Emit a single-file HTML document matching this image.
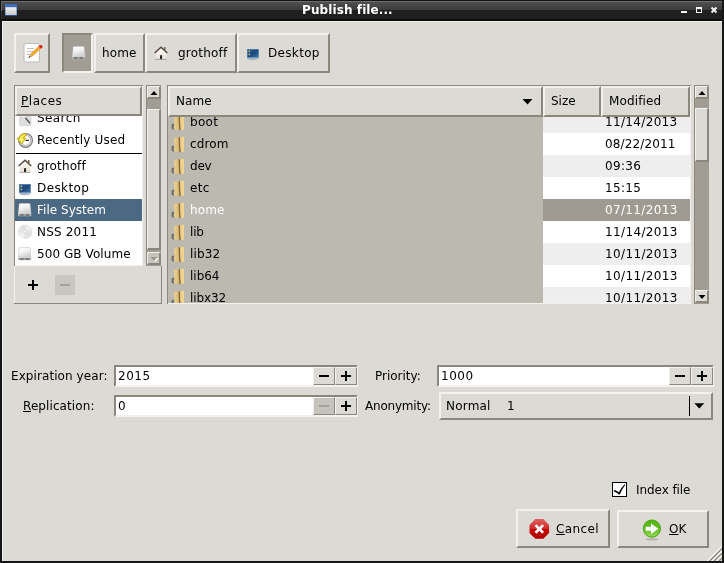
<!DOCTYPE html>
<html>
<head>
<meta charset="utf-8">
<title>Publish file...</title>
<style>
html,body{margin:0;padding:0;}
body{width:724px;height:563px;overflow:hidden;background:#dcdad5;font-family:"DejaVu Sans","Liberation Sans",sans-serif;font-size:12px;color:#000;position:relative;}
.abs{position:absolute;}
svg{display:block;overflow:visible;}
#win{position:absolute;left:0;top:0;width:724px;height:563px;background:#dcdad5;overflow:hidden;}
#title{position:absolute;left:0;top:0;width:724px;height:21px;background:linear-gradient(#141414 0,#141414 1px,#525252 1px,#3b3b3b 10px,#202020 10px,#1f1f1f 19px,#0c0c0c 19.500px,#0c0c0c 100%);}
#title .t{position:absolute;left:302px;top:2px;white-space:nowrap;letter-spacing:0.1px;color:#fff;font-weight:bold;font-size:12px;line-height:16px;will-change:transform;}
.bl{position:absolute;left:0;top:19px;width:2px;height:544px;background:#161616;}
.br{position:absolute;right:0;top:0;width:2px;height:563px;background:#161616;}
.bb{position:absolute;left:0;bottom:0;width:724px;height:2px;background:#161616;}
.btn{position:absolute;box-sizing:border-box;background:#dcdad5;border-style:solid;border-width:2px;border-color:#f2f1ee #8b877d #8b877d #f2f1ee;}
.btn.pressed{background:#a19d95;border-color:#8b877d #f2f1ee #f2f1ee #8b877d;}
.sbtn{position:absolute;box-sizing:border-box;border-style:solid;border-width:1px 2px 2px 1px;border-color:#f2f1ee #8b877d #8b877d #f2f1ee;}
.sbtn1{position:absolute;box-sizing:border-box;border-style:solid;border-width:1px;border-color:#f2f1ee #8b877d #8b877d #f2f1ee;}
.lbl{position:absolute;white-space:nowrap;line-height:16px;will-change:transform;}
.u{text-decoration:underline;}
.entry{position:absolute;box-sizing:border-box;background:#fff;border-style:solid;border-width:2px;border-color:#8b877d #f2f1ee #f2f1ee #8b877d;}
.sel{color:#fff;}
</style>
</head>
<body>
<div id="win">
<div id="title">
<div class="abs" style="left:1px;top:1px;width:722px;height:1px;background:#6e6e6e"></div>
<div class="abs" style="left:0;top:0;width:1px;height:21px;background:#101010"></div><div class="abs" style="left:1px;top:2px;width:1px;height:9px;background:#646464"></div><div class="abs" style="left:1px;top:11px;width:1px;height:8px;background:#333"></div>
<svg class="abs" style="left:5px;top:4px" width="12" height="12"><defs><linearGradient id="wg" x1="0" y1="0" x2="0" y2="1"><stop offset="0" stop-color="#f2f2f2"/><stop offset="1" stop-color="#c6c6c6"/></linearGradient></defs><rect width="12" height="12" fill="#3f6fb8"/><rect x="0.500" y="3.200" width="11" height="8" fill="url(#wg)"/><rect x="0" y="11" width="12" height="1" fill="#2c4f8c"/></svg>
<div class="t">Publish file...</div>
<svg class="abs" style="left:680px;top:6px" width="40" height="9">
<rect x="1" y="5" width="6" height="2" fill="#f4f4f4"/>
<rect x="16.500" y="1.500" width="5" height="5" fill="none" stroke="#f4f4f4" stroke-width="1"/><rect x="16" y="1" width="6" height="2" fill="#f4f4f4"/>
<path d="M31.500 1.500 L36.500 6.500 M36.500 1.500 L31.500 6.500" stroke="#f4f4f4" stroke-width="1.900" stroke-linecap="butt"/>
</svg>
</div>
<div class="bl"></div><div class="br"></div><div class="bb"></div>
<div class="abs" style="left:2px;top:21px;width:720px;height:1px;background:#efeeeb"></div>
<div class="abs" style="left:2px;top:21px;width:1px;height:540px;background:#efeeeb"></div>
<div class="btn " style="left:14px;top:33px;width:36px;height:40px;"></div>
<svg class="abs" style="left:23px;top:42px" width="21" height="22"><defs><linearGradient id="pg" x1="0" y1="0" x2="1" y2="1"><stop offset="0" stop-color="#f7b24a"/><stop offset="1" stop-color="#e8961e"/></linearGradient></defs>
<rect x="1" y="1.500" width="15.500" height="18.500" rx="1.800" fill="#fdfdfd" stroke="#bcbcba" stroke-width="1"/>
<path d="M4 6.500H11 M4 9.500H10 M4 12.500H8 M4 15.500H7" stroke="#c4c4c2" stroke-width="1"/>
<path d="M7.100 12.100 L15.500 4.350 L17.800 6.850 L9.400 14.600Z" fill="url(#pg)"/>
<path d="M7.100 12.100 L5.900 15.500 L9.400 14.600Z" fill="#c9a56c"/>
<path d="M6.500 13.800 L5.900 15.500 L7.700 15.050Z" fill="#4a4030"/>
<path d="M15.500 4.350 L16.400 3.500 Q17.800 2.400 19 3.600 Q20.100 4.900 19 5.900 L17.800 6.850Z" fill="#d61c1c"/></svg>
<div class="btn pressed" style="left:62px;top:33px;width:31px;height:40px;"></div>
<svg class="abs" style="left:71.6px;top:46.2px" width="14" height="14"><defs><linearGradient id="dg" x1="0" y1="0" x2="0.350" y2="1"><stop offset="0" stop-color="#ffffff"/><stop offset="0.450" stop-color="#f3f3f3"/><stop offset="1" stop-color="#d0d0d0"/></linearGradient></defs>
<path d="M2.200 0.200 H11.100 Q12.200 0.200 12.350 1.300 L13.300 10.800 V12.300 Q13.300 13.300 12.300 13.300 H1 Q0 13.300 0 12.300 V10.800 L0.950 1.300 Q1.100 0.200 2.200 0.200Z" fill="#c4c4c4"/>
<path d="M2.400 0.700 H10.900 Q11.800 0.700 11.900 1.600 L12.800 10.900 H0.500 L1.400 1.600 Q1.500 0.700 2.400 0.700Z" fill="url(#dg)"/>
<rect x="0.400" y="10.900" width="12.500" height="2.100" rx="0.700" fill="#a3a3a3"/>
<rect x="2.300" y="11.300" width="3.200" height="1.500" fill="#6c6c6c"/><rect x="7.700" y="11.300" width="3.200" height="1.500" fill="#6c6c6c"/></svg>
<div class="btn " style="left:94px;top:33px;width:51px;height:40px;"></div>
<div class="lbl" style="left:102px;top:45px;letter-spacing:0.12px;">home</div>
<div class="btn " style="left:145px;top:33px;width:92px;height:40px;"></div>
<svg class="abs" style="left:154.2px;top:45.8px" width="14" height="14"><defs><linearGradient id="hg" x1="0" y1="0" x2="0" y2="1"><stop offset="0" stop-color="#fbfaf8"/><stop offset="1" stop-color="#e9e3d8"/></linearGradient></defs>
<rect x="10" y="1" width="1.500" height="3" fill="#74614f"/>
<path d="M1.600 6.600 L7 2 L12.400 6.600 V13.200 H1.600Z" fill="url(#hg)"/>
<path d="M0.700 7 L7 1.300 L13.300 7" fill="none" stroke="#54453a" stroke-width="1.400"/>
<rect x="6" y="9.200" width="2.100" height="4" fill="#2b2622"/>
<path d="M1.300 13.400 H12.700" stroke="#9b9488" stroke-width="0.800"/></svg>
<div class="lbl" style="left:178px;top:45px;letter-spacing:0.20px;">grothoff</div>
<div class="btn " style="left:237px;top:33px;width:93px;height:40px;"></div>
<svg class="abs" style="left:247px;top:49px" width="12" height="12"><defs><linearGradient id="dk" x1="0" y1="0" x2="1" y2="1"><stop offset="0" stop-color="#2c5e94"/><stop offset="0.500" stop-color="#1b497c"/><stop offset="1" stop-color="#4378ae"/></linearGradient></defs>
<ellipse cx="5.900" cy="10.300" rx="4.600" ry="0.900" fill="#b4b4b2"/>
<rect x="0.300" y="0.300" width="11.200" height="8.800" fill="url(#dk)" stroke="#4a77a8" stroke-width="0.600"/>
<rect x="1.700" y="1.600" width="1.400" height="1.500" fill="#e3c55c"/><rect x="1.700" y="4.700" width="1.400" height="1.500" fill="#e3c55c"/>
<rect x="0.300" y="8.500" width="11.200" height="1" fill="#a9c3de"/></svg>
<div class="lbl" style="left:268px;top:45px;letter-spacing:0.33px;">Desktop</div>
<div class="abs" style="left:14px;top:85px;width:129px;height:181px;background:#8b877d;"></div>
<div class="abs" style="left:15px;top:86px;width:128px;height:180px;background:#f2f1ee;"></div>
<div class="abs" style="left:15px;top:86px;width:127px;height:179px;background:#fff;"></div>
<div class="abs" style="left:15px;top:116px;width:127px;height:149px;overflow:hidden">
<div class="abs" style="left:0px;top:83px;width:127px;height:22px;background:#4b6983;"></div>
<div class="lbl" style="left:22px;top:-6px;letter-spacing:0.42px;">Search</div>
<div class="lbl" style="left:22px;top:16px;letter-spacing:0.20px;">Recently Used</div>
<div class="lbl" style="left:22px;top:42px;letter-spacing:0.14px;">grothoff</div>
<div class="lbl" style="left:22px;top:64px;letter-spacing:0.39px;">Desktop</div>
<div class="lbl sel" style="left:22px;top:86px;letter-spacing:0.02px;">File System</div>
<div class="lbl" style="left:22px;top:108px;letter-spacing:0.19px;">NSS 2011</div>
<div class="lbl" style="left:22px;top:130px;letter-spacing:0.07px;">500 GB Volume</div>
<div class="abs" style="left:1px;top:37px;width:126px;height:1px;background:#000;"></div>
</div>
<svg class="abs" style="left:19px;top:107px" width="13" height="19"><rect x="0.500" y="4" width="11.500" height="14.700" rx="1" fill="#dedede" stroke="#cfcfcf" stroke-width="0.600"/>
<circle cx="4" cy="7" r="4" fill="#f4f4f6" stroke="#c8c8c8" stroke-width="0.800"/>
<path d="M6.500 11 L11 16.200" stroke="#4a4e55" stroke-width="1.300"/></svg>
<svg class="abs" style="left:16px;top:132px" width="18" height="17"><circle cx="9.600" cy="8.400" r="6.800" fill="#fdfdfd" stroke="#80807e" stroke-width="1.400"/>
<circle cx="9.600" cy="8.400" r="5.100" fill="none" stroke="#bdbdbb" stroke-width="1.100"/>
<path d="M9.600 8.400 H13" stroke="#111" stroke-width="1.100"/>
<path d="M3.300 6.400 L1 6.400 L5.500 11.700 L9.900 6.400 L7.600 6.400 Q7.600 4.300 9.800 3.900 L9.800 1.600 Q3.600 1.800 3.300 6.400Z" fill="#f7e650" stroke="#c4a000" stroke-width="0.900" stroke-linejoin="round"/>
<path d="M4.600 6.600 L5.500 9.800 L6.400 6.600" fill="#fffbd0"/></svg>
<svg class="abs" style="left:18.2px;top:158.8px" width="14" height="14"><defs><linearGradient id="hg" x1="0" y1="0" x2="0" y2="1"><stop offset="0" stop-color="#fbfaf8"/><stop offset="1" stop-color="#e9e3d8"/></linearGradient></defs>
<rect x="10" y="1" width="1.500" height="3" fill="#74614f"/>
<path d="M1.600 6.600 L7 2 L12.400 6.600 V13.200 H1.600Z" fill="url(#hg)"/>
<path d="M0.700 7 L7 1.300 L13.300 7" fill="none" stroke="#54453a" stroke-width="1.400"/>
<rect x="6" y="9.200" width="2.100" height="4" fill="#2b2622"/>
<path d="M1.300 13.400 H12.700" stroke="#9b9488" stroke-width="0.800"/></svg>
<svg class="abs" style="left:19px;top:184.1px" width="12" height="12"><defs><linearGradient id="dk" x1="0" y1="0" x2="1" y2="1"><stop offset="0" stop-color="#2c5e94"/><stop offset="0.500" stop-color="#1b497c"/><stop offset="1" stop-color="#4378ae"/></linearGradient></defs>
<ellipse cx="5.900" cy="10.300" rx="4.600" ry="0.900" fill="#b4b4b2"/>
<rect x="0.300" y="0.300" width="11.200" height="8.800" fill="url(#dk)" stroke="#4a77a8" stroke-width="0.600"/>
<rect x="1.700" y="1.600" width="1.400" height="1.500" fill="#e3c55c"/><rect x="1.700" y="4.700" width="1.400" height="1.500" fill="#e3c55c"/>
<rect x="0.300" y="8.500" width="11.200" height="1" fill="#a9c3de"/></svg>
<svg class="abs" style="left:18.3px;top:203.2px" width="14" height="14"><defs><linearGradient id="dg" x1="0" y1="0" x2="0.350" y2="1"><stop offset="0" stop-color="#ffffff"/><stop offset="0.450" stop-color="#f3f3f3"/><stop offset="1" stop-color="#d0d0d0"/></linearGradient></defs>
<path d="M2.200 0.200 H11.100 Q12.200 0.200 12.350 1.300 L13.300 10.800 V12.300 Q13.300 13.300 12.300 13.300 H1 Q0 13.300 0 12.300 V10.800 L0.950 1.300 Q1.100 0.200 2.200 0.200Z" fill="#c4c4c4"/>
<path d="M2.400 0.700 H10.900 Q11.800 0.700 11.900 1.600 L12.800 10.900 H0.500 L1.400 1.600 Q1.500 0.700 2.400 0.700Z" fill="url(#dg)"/>
<rect x="0.400" y="10.900" width="12.500" height="2.100" rx="0.700" fill="#a3a3a3"/>
<rect x="2.300" y="11.300" width="3.200" height="1.500" fill="#6c6c6c"/><rect x="7.700" y="11.300" width="3.200" height="1.500" fill="#6c6c6c"/></svg>
<svg class="abs" style="left:18px;top:224px" width="15" height="15"><defs><radialGradient id="cdg"><stop offset="0" stop-color="#e0e0e0"/><stop offset="0.280" stop-color="#d9d9d9"/><stop offset="0.330" stop-color="#e6e6e6"/><stop offset="0.900" stop-color="#e3e3e3"/><stop offset="1" stop-color="#ececec"/></radialGradient></defs>
<circle cx="7.200" cy="7.700" r="7.300" fill="url(#cdg)"/>
<path d="M7.200 7.700 L9.500 1.300 A6.800 6.800 0 0 1 13.600 5.400Z" fill="#f6f6f6" opacity="0.700"/>
<path d="M7.200 7.700 L4.900 14.100 A6.800 6.800 0 0 1 0.800 10Z" fill="#f6f6f6" opacity="0.700"/>
<path d="M7.200 7.700 L2.600 2.900 A6.800 6.800 0 0 1 3.900 1.900Z" fill="#ebe8a6" opacity="0.450"/>
<path d="M7.200 7.700 L3.900 1.900 A6.800 6.800 0 0 1 5 1.400Z" fill="#cfe2ea" opacity="0.800"/>
<path d="M7.200 7.700 L5 1.400 A6.800 6.800 0 0 1 6 1.100Z" fill="#ecd6e2" opacity="0.700"/>
<path d="M7.200 7.700 L11.800 12.500 A6.800 6.800 0 0 1 10.500 13.500Z" fill="#ebe8a6" opacity="0.450"/>
<path d="M7.200 7.700 L12.700 11.500 A6.800 6.800 0 0 1 11.800 12.500Z" fill="#cfe2ea" opacity="0.800"/>
<path d="M7.200 7.700 L13.300 10.500 A6.800 6.800 0 0 1 12.700 11.500Z" fill="#ecd6e2" opacity="0.700"/>
<circle cx="7.200" cy="7.700" r="2.100" fill="#dedede"/>
<ellipse cx="7.200" cy="7.700" rx="1.200" ry="0.800" fill="#fff"/></svg>
<svg class="abs" style="left:18.3px;top:247.2px" width="14" height="14"><defs><linearGradient id="dg" x1="0" y1="0" x2="0.350" y2="1"><stop offset="0" stop-color="#ffffff"/><stop offset="0.450" stop-color="#f3f3f3"/><stop offset="1" stop-color="#d0d0d0"/></linearGradient></defs>
<path d="M2.200 0.200 H11.100 Q12.200 0.200 12.350 1.300 L13.300 10.800 V12.300 Q13.300 13.300 12.300 13.300 H1 Q0 13.300 0 12.300 V10.800 L0.950 1.300 Q1.100 0.200 2.200 0.200Z" fill="#c4c4c4"/>
<path d="M2.400 0.700 H10.900 Q11.800 0.700 11.900 1.600 L12.800 10.900 H0.500 L1.400 1.600 Q1.500 0.700 2.400 0.700Z" fill="url(#dg)"/>
<rect x="0.400" y="10.900" width="12.500" height="2.100" rx="0.700" fill="#a3a3a3"/>
<rect x="2.300" y="11.300" width="3.200" height="1.500" fill="#6c6c6c"/><rect x="7.700" y="11.300" width="3.200" height="1.500" fill="#6c6c6c"/></svg>
<div class="btn " style="left:15px;top:86px;width:127px;height:30px;"></div>
<div class="lbl" style="left:21px;top:93px;letter-spacing:0.53px;"><span class="u">P</span>laces</div>
<div class="abs" style="left:146px;top:85px;width:15px;height:181px;background:#a19d95;"></div>
<div class="abs" style="left:146px;top:85px;width:1px;height:181px;background:#8b877d;"></div>
<div class="abs" style="left:146px;top:85px;width:15px;height:1px;background:#8b877d;"></div>
<div class="sbtn" style="left:147px;top:86px;width:14px;height:13px;background:#dcdad5"></div>
<svg class="abs" style="left:0;top:0" width="724" height="563"><polygon points="150.5,95 157.5,95 154.0,91" fill="#000"/></svg>
<div class="sbtn" style="left:147px;top:252px;width:14px;height:13px;background:#c6c3bc"></div>
<svg class="abs" style="left:0;top:0" width="724" height="563"><polygon points="150.5,257 157.5,257 154.0,261" fill="#fff" transform="translate(1,1)"/><polygon points="150.5,257 157.5,257 154.0,261" fill="#9a968d"/></svg>
<div class="sbtn" style="left:147px;top:109px;width:14px;height:141px;background:#dcdad5"></div>
<div class="abs" style="left:14px;top:266px;width:148px;height:38px;background:#dcdad5;"></div>
<div class="abs" style="left:161px;top:266px;width:1px;height:38px;background:#8b877d;"></div>
<div class="abs" style="left:14px;top:303px;width:148px;height:1px;background:#8b877d;"></div>
<div class="abs" style="left:14px;top:266px;width:1px;height:37px;background:#f2f1ee;"></div>
<div class="abs" style="left:28px;top:284px;width:10px;height:2px;background:#000;"></div>
<div class="abs" style="left:32px;top:280px;width:2px;height:10px;background:#000;"></div>
<div class="abs" style="left:55px;top:275px;width:20px;height:20px;background:#c9c6bf;"></div>
<div class="abs" style="left:60px;top:284px;width:10px;height:2px;background:#a5a19a;"></div>
<div class="abs" style="left:167px;top:85px;width:524px;height:219px;background:#8b877d;"></div>
<div class="abs" style="left:168px;top:86px;width:523px;height:218px;background:#f2f1ee;"></div>
<div class="abs" style="left:168px;top:86px;width:522px;height:217px;background:#fff;"></div>
<div class="abs" style="left:168px;top:116px;width:522px;height:187px;overflow:hidden">
<div class="abs" style="left:0px;top:0px;width:375px;height:187px;background:#bcb9b1;"></div>
<div class="abs" style="left:375px;top:-5px;width:147px;height:22px;background:#eeeeee;"></div>
<div class="lbl" style="left:22px;top:-2px;letter-spacing:0.32px;">boot</div>
<div class="lbl" style="left:437px;top:-2px;letter-spacing:0.34px;">11/14/2013</div>
<div class="lbl" style="left:22px;top:20px;letter-spacing:0.15px;">cdrom</div>
<div class="lbl" style="left:437px;top:20px;letter-spacing:0.14px;">08/22/2011</div>
<div class="abs" style="left:375px;top:39px;width:147px;height:22px;background:#eeeeee;"></div>
<div class="lbl" style="left:22px;top:42px;letter-spacing:-0.20px;">dev</div>
<div class="lbl" style="left:437px;top:42px;letter-spacing:0.34px;">09:36</div>
<div class="lbl" style="left:22px;top:64px;letter-spacing:0.31px;">etc</div>
<div class="lbl" style="left:437px;top:64px;letter-spacing:0.31px;">15:15</div>
<div class="abs" style="left:375px;top:83px;width:147px;height:22px;background:#9f9b93;"></div>
<div class="lbl sel" style="left:22px;top:86px;letter-spacing:0.14px;">home</div>
<div class="lbl sel" style="left:437px;top:86px;letter-spacing:0.35px;">07/11/2013</div>
<div class="lbl" style="left:22px;top:108px;letter-spacing:-0.20px;">lib</div>
<div class="lbl" style="left:437px;top:108px;letter-spacing:0.36px;">11/14/2013</div>
<div class="abs" style="left:375px;top:127px;width:147px;height:22px;background:#eeeeee;"></div>
<div class="lbl" style="left:22px;top:130px;letter-spacing:0.15px;">lib32</div>
<div class="lbl" style="left:437px;top:130px;letter-spacing:0.36px;">10/11/2013</div>
<div class="lbl" style="left:22px;top:152px;letter-spacing:-0.02px;">lib64</div>
<div class="lbl" style="left:437px;top:152px;letter-spacing:0.36px;">10/11/2013</div>
<div class="abs" style="left:375px;top:171px;width:147px;height:22px;background:#eeeeee;"></div>
<div class="lbl" style="left:22px;top:174px;letter-spacing:-0.08px;">libx32</div>
<div class="lbl" style="left:437px;top:174px;letter-spacing:0.36px;">10/11/2013</div>
</div>
<div class="abs" style="left:168px;top:116px;width:30px;height:187px;overflow:hidden">
<svg class="abs" style="left:3px;top:-2px" width="14" height="17"><defs><linearGradient id="fl" x1="0" y1="0" x2="1" y2="0"><stop offset="0" stop-color="#ead195"/><stop offset="1" stop-color="#d9b66c"/></linearGradient>
<linearGradient id="fr" x1="0" y1="0" x2="1" y2="0"><stop offset="0" stop-color="#e6c67e"/><stop offset="1" stop-color="#f1d998"/></linearGradient></defs>
<path d="M0.500 10.500 Q2 9 3.500 9.500 V15.500 H1.500 Q0 14 0.500 10.500Z" fill="#77746c"/>
<path d="M3.200 12 L3.800 15.200" stroke="#e8eef2" stroke-width="0.700"/>
<path d="M3 1.800 L8.300 1.200 V15.400 L3.600 15.800Z" fill="url(#fl)"/>
<path d="M8.300 1 L13 0.800 V15.600 L9.300 16.600 L8.800 10Z" fill="url(#fr)"/>
<path d="M8.300 1.200 L8.500 10 L9.100 16.300" stroke="#80653a" stroke-width="1.300" fill="none"/></svg>
<svg class="abs" style="left:3px;top:20px" width="14" height="17"><defs><linearGradient id="fl" x1="0" y1="0" x2="1" y2="0"><stop offset="0" stop-color="#ead195"/><stop offset="1" stop-color="#d9b66c"/></linearGradient>
<linearGradient id="fr" x1="0" y1="0" x2="1" y2="0"><stop offset="0" stop-color="#e6c67e"/><stop offset="1" stop-color="#f1d998"/></linearGradient></defs>
<path d="M0.500 10.500 Q2 9 3.500 9.500 V15.500 H1.500 Q0 14 0.500 10.500Z" fill="#77746c"/>
<path d="M3.200 12 L3.800 15.200" stroke="#e8eef2" stroke-width="0.700"/>
<path d="M3 1.800 L8.300 1.200 V15.400 L3.600 15.800Z" fill="url(#fl)"/>
<path d="M8.300 1 L13 0.800 V15.600 L9.300 16.600 L8.800 10Z" fill="url(#fr)"/>
<path d="M8.300 1.200 L8.500 10 L9.100 16.300" stroke="#80653a" stroke-width="1.300" fill="none"/></svg>
<svg class="abs" style="left:3px;top:42px" width="14" height="17"><defs><linearGradient id="fl" x1="0" y1="0" x2="1" y2="0"><stop offset="0" stop-color="#ead195"/><stop offset="1" stop-color="#d9b66c"/></linearGradient>
<linearGradient id="fr" x1="0" y1="0" x2="1" y2="0"><stop offset="0" stop-color="#e6c67e"/><stop offset="1" stop-color="#f1d998"/></linearGradient></defs>
<path d="M0.500 10.500 Q2 9 3.500 9.500 V15.500 H1.500 Q0 14 0.500 10.500Z" fill="#77746c"/>
<path d="M3.200 12 L3.800 15.200" stroke="#e8eef2" stroke-width="0.700"/>
<path d="M3 1.800 L8.300 1.200 V15.400 L3.600 15.800Z" fill="url(#fl)"/>
<path d="M8.300 1 L13 0.800 V15.600 L9.300 16.600 L8.800 10Z" fill="url(#fr)"/>
<path d="M8.300 1.200 L8.500 10 L9.100 16.300" stroke="#80653a" stroke-width="1.300" fill="none"/></svg>
<svg class="abs" style="left:3px;top:64px" width="14" height="17"><defs><linearGradient id="fl" x1="0" y1="0" x2="1" y2="0"><stop offset="0" stop-color="#ead195"/><stop offset="1" stop-color="#d9b66c"/></linearGradient>
<linearGradient id="fr" x1="0" y1="0" x2="1" y2="0"><stop offset="0" stop-color="#e6c67e"/><stop offset="1" stop-color="#f1d998"/></linearGradient></defs>
<path d="M0.500 10.500 Q2 9 3.500 9.500 V15.500 H1.500 Q0 14 0.500 10.500Z" fill="#77746c"/>
<path d="M3.200 12 L3.800 15.200" stroke="#e8eef2" stroke-width="0.700"/>
<path d="M3 1.800 L8.300 1.200 V15.400 L3.600 15.800Z" fill="url(#fl)"/>
<path d="M8.300 1 L13 0.800 V15.600 L9.300 16.600 L8.800 10Z" fill="url(#fr)"/>
<path d="M8.300 1.200 L8.500 10 L9.100 16.300" stroke="#80653a" stroke-width="1.300" fill="none"/></svg>
<svg class="abs" style="left:3px;top:86px" width="14" height="17"><defs><linearGradient id="fl" x1="0" y1="0" x2="1" y2="0"><stop offset="0" stop-color="#ead195"/><stop offset="1" stop-color="#d9b66c"/></linearGradient>
<linearGradient id="fr" x1="0" y1="0" x2="1" y2="0"><stop offset="0" stop-color="#e6c67e"/><stop offset="1" stop-color="#f1d998"/></linearGradient></defs>
<path d="M0.500 10.500 Q2 9 3.500 9.500 V15.500 H1.500 Q0 14 0.500 10.500Z" fill="#77746c"/>
<path d="M3.200 12 L3.800 15.200" stroke="#e8eef2" stroke-width="0.700"/>
<path d="M3 1.800 L8.300 1.200 V15.400 L3.600 15.800Z" fill="url(#fl)"/>
<path d="M8.300 1 L13 0.800 V15.600 L9.300 16.600 L8.800 10Z" fill="url(#fr)"/>
<path d="M8.300 1.200 L8.500 10 L9.100 16.300" stroke="#80653a" stroke-width="1.300" fill="none"/></svg>
<svg class="abs" style="left:3px;top:108px" width="14" height="17"><defs><linearGradient id="fl" x1="0" y1="0" x2="1" y2="0"><stop offset="0" stop-color="#ead195"/><stop offset="1" stop-color="#d9b66c"/></linearGradient>
<linearGradient id="fr" x1="0" y1="0" x2="1" y2="0"><stop offset="0" stop-color="#e6c67e"/><stop offset="1" stop-color="#f1d998"/></linearGradient></defs>
<path d="M0.500 10.500 Q2 9 3.500 9.500 V15.500 H1.500 Q0 14 0.500 10.500Z" fill="#77746c"/>
<path d="M3.200 12 L3.800 15.200" stroke="#e8eef2" stroke-width="0.700"/>
<path d="M3 1.800 L8.300 1.200 V15.400 L3.600 15.800Z" fill="url(#fl)"/>
<path d="M8.300 1 L13 0.800 V15.600 L9.300 16.600 L8.800 10Z" fill="url(#fr)"/>
<path d="M8.300 1.200 L8.500 10 L9.100 16.300" stroke="#80653a" stroke-width="1.300" fill="none"/></svg>
<svg class="abs" style="left:3px;top:130px" width="14" height="17"><defs><linearGradient id="fl" x1="0" y1="0" x2="1" y2="0"><stop offset="0" stop-color="#ead195"/><stop offset="1" stop-color="#d9b66c"/></linearGradient>
<linearGradient id="fr" x1="0" y1="0" x2="1" y2="0"><stop offset="0" stop-color="#e6c67e"/><stop offset="1" stop-color="#f1d998"/></linearGradient></defs>
<path d="M0.500 10.500 Q2 9 3.500 9.500 V15.500 H1.500 Q0 14 0.500 10.500Z" fill="#77746c"/>
<path d="M3.200 12 L3.800 15.200" stroke="#e8eef2" stroke-width="0.700"/>
<path d="M3 1.800 L8.300 1.200 V15.400 L3.600 15.800Z" fill="url(#fl)"/>
<path d="M8.300 1 L13 0.800 V15.600 L9.300 16.600 L8.800 10Z" fill="url(#fr)"/>
<path d="M8.300 1.200 L8.500 10 L9.100 16.300" stroke="#80653a" stroke-width="1.300" fill="none"/></svg>
<svg class="abs" style="left:3px;top:152px" width="14" height="17"><defs><linearGradient id="fl" x1="0" y1="0" x2="1" y2="0"><stop offset="0" stop-color="#ead195"/><stop offset="1" stop-color="#d9b66c"/></linearGradient>
<linearGradient id="fr" x1="0" y1="0" x2="1" y2="0"><stop offset="0" stop-color="#e6c67e"/><stop offset="1" stop-color="#f1d998"/></linearGradient></defs>
<path d="M0.500 10.500 Q2 9 3.500 9.500 V15.500 H1.500 Q0 14 0.500 10.500Z" fill="#77746c"/>
<path d="M3.200 12 L3.800 15.200" stroke="#e8eef2" stroke-width="0.700"/>
<path d="M3 1.800 L8.300 1.200 V15.400 L3.600 15.800Z" fill="url(#fl)"/>
<path d="M8.300 1 L13 0.800 V15.600 L9.300 16.600 L8.800 10Z" fill="url(#fr)"/>
<path d="M8.300 1.200 L8.500 10 L9.100 16.300" stroke="#80653a" stroke-width="1.300" fill="none"/></svg>
<svg class="abs" style="left:3px;top:174px" width="14" height="17"><defs><linearGradient id="fl" x1="0" y1="0" x2="1" y2="0"><stop offset="0" stop-color="#ead195"/><stop offset="1" stop-color="#d9b66c"/></linearGradient>
<linearGradient id="fr" x1="0" y1="0" x2="1" y2="0"><stop offset="0" stop-color="#e6c67e"/><stop offset="1" stop-color="#f1d998"/></linearGradient></defs>
<path d="M0.500 10.500 Q2 9 3.500 9.500 V15.500 H1.500 Q0 14 0.500 10.500Z" fill="#77746c"/>
<path d="M3.200 12 L3.800 15.200" stroke="#e8eef2" stroke-width="0.700"/>
<path d="M3 1.800 L8.300 1.200 V15.400 L3.600 15.800Z" fill="url(#fl)"/>
<path d="M8.300 1 L13 0.800 V15.600 L9.300 16.600 L8.800 10Z" fill="url(#fr)"/>
<path d="M8.300 1.200 L8.500 10 L9.100 16.300" stroke="#80653a" stroke-width="1.300" fill="none"/></svg>
</div>
<div class="btn " style="left:168px;top:86px;width:375px;height:31px;"></div>
<div class="lbl" style="left:176px;top:93px;letter-spacing:0.09px;">Name</div>
<svg class="abs" style="left:522px;top:99px" width="11" height="6"><polygon points="0.500,0 10.500,0 5.500,5.500" fill="#000"/></svg>
<div class="btn " style="left:543px;top:86px;width:58px;height:31px;"></div>
<div class="lbl" style="left:551px;top:93px;">Size</div>
<div class="btn " style="left:601px;top:86px;width:89px;height:31px;"></div>
<div class="lbl" style="left:609px;top:93px;letter-spacing:0.14px;">Modified</div>
<div class="abs" style="left:694px;top:85px;width:15px;height:219px;background:#a19d95;"></div>
<div class="abs" style="left:694px;top:85px;width:1px;height:219px;background:#8b877d;"></div>
<div class="abs" style="left:694px;top:85px;width:15px;height:1px;background:#8b877d;"></div>
<div class="sbtn" style="left:695px;top:86px;width:14px;height:13px;background:#dcdad5"></div>
<svg class="abs" style="left:0;top:0" width="724" height="563"><polygon points="698.5,95 705.5,95 702.0,91" fill="#000"/></svg>
<div class="sbtn" style="left:695px;top:290px;width:14px;height:13px;background:#dcdad5"></div>
<svg class="abs" style="left:0;top:0" width="724" height="563"><polygon points="698.5,295 705.5,295 702.0,299" fill="#000"/></svg>
<div class="sbtn" style="left:695px;top:108px;width:14px;height:54px;background:#dcdad5"></div>
<div class="lbl" style="left:11px;top:368px;letter-spacing:0.08px;">Expiration year:</div>
<div class="entry" style="left:114px;top:365px;width:244px;height:22px"></div>
<div class="sbtn1" style="left:313px;top:367px;width:22px;height:18px;background:#dcdad5"></div>
<div class="sbtn1" style="left:335px;top:367px;width:22px;height:18px;background:#dcdad5"></div>
<div class="abs" style="left:319px;top:375px;width:10px;height:2px;background:#000;"></div>
<div class="abs" style="left:341px;top:375px;width:10px;height:2px;background:#000;"></div>
<div class="abs" style="left:345px;top:371px;width:2px;height:10px;background:#000;"></div>
<div class="lbl" style="left:118px;top:368px;letter-spacing:0.51px;">2015</div>
<div class="lbl" style="left:23px;top:398px;letter-spacing:0.09px;"><span class="u">R</span>eplication:</div>
<div class="entry" style="left:114px;top:395px;width:244px;height:22px"></div>
<div class="sbtn1" style="left:313px;top:397px;width:22px;height:18px;background:#c6c3bc"></div>
<div class="sbtn1" style="left:335px;top:397px;width:22px;height:18px;background:#dcdad5"></div>
<div class="abs" style="left:319px;top:405px;width:10px;height:2px;background:#a5a19a;"></div>
<div class="abs" style="left:341px;top:405px;width:10px;height:2px;background:#000;"></div>
<div class="abs" style="left:345px;top:401px;width:2px;height:10px;background:#000;"></div>
<div class="lbl" style="left:118px;top:398px;">0</div>
<div class="lbl" style="left:375px;top:368px;letter-spacing:-0.01px;">Priority:</div>
<div class="entry" style="left:437px;top:365px;width:277px;height:22px"></div>
<div class="sbtn1" style="left:669px;top:367px;width:22px;height:18px;background:#dcdad5"></div>
<div class="sbtn1" style="left:691px;top:367px;width:22px;height:18px;background:#dcdad5"></div>
<div class="abs" style="left:675px;top:375px;width:10px;height:2px;background:#000;"></div>
<div class="abs" style="left:697px;top:375px;width:10px;height:2px;background:#000;"></div>
<div class="abs" style="left:701px;top:371px;width:2px;height:10px;background:#000;"></div>
<div class="lbl" style="left:441px;top:368px;letter-spacing:0.54px;">1000</div>
<div class="lbl" style="left:365px;top:398px;letter-spacing:-0.20px;">Anonymity:</div>
<div class="btn " style="left:439px;top:392px;width:274px;height:28px;"></div>
<div class="lbl" style="left:446px;top:398px;letter-spacing:0.20px;">Normal</div>
<div class="lbl" style="left:507px;top:398px;">1</div>
<div class="abs" style="left:689px;top:396px;width:1px;height:20px;background:#000;"></div>
<svg class="abs" style="left:694px;top:403px" width="11" height="6"><polygon points="0.300,0.300 10.300,0.300 5.300,5.600" fill="#000"/></svg>
<div class="abs" style="left:612px;top:482px;width:13px;height:13px;background:#fff;border:1px solid #000"></div>
<svg class="abs" style="left:612px;top:482px" width="15" height="15"><path d="M1.900 8.100 Q4.500 8.300 6.900 10.300 Q9 6 12.600 2.300 L13.200 2.900 Q9.800 7 7.800 12.500 L7 12.600 Q5 10.500 1.900 9.500Z" fill="#000"/></svg>
<div class="lbl" style="left:636px;top:482px;letter-spacing:-0.07px;">Index file</div>
<div class="btn " style="left:516px;top:509px;width:94px;height:39px;"></div>
<svg class="abs" style="left:529px;top:518px" width="21" height="22"><defs><linearGradient id="rg" x1="0" y1="0" x2="0" y2="1"><stop offset="0" stop-color="#e06060"/><stop offset="0.500" stop-color="#d02a2a"/><stop offset="0.520" stop-color="#c40404"/><stop offset="1" stop-color="#b00000"/></linearGradient></defs>
<polygon points="6.300,1.100 14.300,1.100 20.100,6.900 20.100,14.900 14.300,20.700 6.300,20.700 0.500,14.900 0.500,6.900" fill="url(#rg)"/>
<path d="M6.500 7.100 L14.100 14.700 M14.100 7.100 L6.500 14.700" stroke="#fff" stroke-width="2.700" stroke-linecap="butt"/></svg>
<div class="lbl" style="left:556px;top:521px;letter-spacing:0.38px;"><span class="u">C</span>ancel</div>
<div class="btn " style="left:617px;top:510px;width:92px;height:38px;"></div>
<svg class="abs" style="left:642px;top:518px" width="21" height="24"><defs><linearGradient id="gg" x1="0" y1="0" x2="0" y2="1"><stop offset="0" stop-color="#56b416"/><stop offset="0.500" stop-color="#62bc20"/><stop offset="1" stop-color="#9ada58"/></linearGradient></defs>
<ellipse cx="10" cy="21.300" rx="6.500" ry="1.300" fill="#b8b6b0"/>
<circle cx="9.900" cy="10.600" r="8.600" fill="url(#gg)" stroke="#4aa60e" stroke-width="1"/>
<path d="M3.600 8.800 H9 V5.600 L16.400 10.800 L9 16 V12.800 H3.600Z" fill="#fff"/></svg>
<div class="lbl" style="left:669px;top:521px;"><span class="u">O</span>K</div>
<svg class="abs" style="left:706px;top:545px;overflow:hidden" width="16" height="16"><path d="M1.500 16 L16 1.500 M6.200 16 L16 6.200 M10.900 16 L16 10.900" stroke="#f6f5f3" stroke-width="1.700"/><path d="M3.500 16 L16 3.500 M8.200 16 L16 8.200 M12.900 16 L16 12.900" stroke="#8b877d" stroke-width="1.300"/></svg>
</div>
</body>
</html>
